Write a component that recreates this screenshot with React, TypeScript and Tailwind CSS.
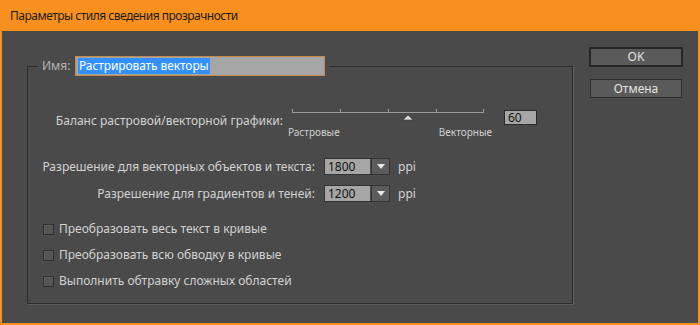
const font = { fontFamily: '"Noto Sans", "Open Sans", sans-serif' };

function Slider() {
  return (
    <div className="ml-[5px] flex w-[204px] flex-col">
      <svg width="204" height="16" className="mt-[2px] block" aria-hidden="true">
        <g stroke="#9c9c9c" strokeWidth="1" shapeRendering="crispEdges">
          <line x1="4" y1="4.5" x2="196" y2="4.5" />
          <line x1="4.5" y1="1" x2="4.5" y2="5" />
          <line x1="52.5" y1="1" x2="52.5" y2="5" />
          <line x1="100.5" y1="1" x2="100.5" y2="5" />
          <line x1="148.5" y1="1" x2="148.5" y2="5" />
          <line x1="195.5" y1="1" x2="195.5" y2="5" />
        </g>
        <polygon points="120,7 115,12 125,12" fill="#d8d8d8" stroke="#3a3a3a" strokeWidth="0.6" />
      </svg>
      <div className="mt-[2px] flex justify-between text-[10px] leading-[13px] text-[#d0d0d0]">
        <span>Растровые</span>
        <span>Векторные</span>
      </div>
    </div>
  );
}

function Dropdown({ value }: { value: string }) {
  return (
    <div className="ml-[9px] flex h-[17px] w-[66px] border border-[#333]">
      <div className="flex flex-1 items-center bg-[#a6a6a6] pl-[3px] text-[12px] leading-none text-[#111]">{value}</div>
      <div className="ml-[1px] flex w-[18px] items-center justify-center border-l border-[#333] bg-[#5c5c5c]">
        <svg width="8" height="5" viewBox="0 0 8 5" aria-hidden="true">
          <polygon points="0,0 8,0 4,5" fill="#e8e8e8" />
        </svg>
      </div>
    </div>
  );
}

function Check({ label }: { label: string }) {
  return (
    <div className="flex h-[18px] items-center pl-[15px]">
      <div className="h-[11px] w-[11px] border border-[#2f2f2f] bg-[#555] shadow-[inset_1px_1px_0_#606060]" />
      <span className="ml-[5px] whitespace-nowrap text-[12px] text-[#d2d2d2]">{label}</span>
    </div>
  );
}

export default function App() {
  return (
    <div style={font} className="flex h-[325px] w-[700px] flex-col bg-[#f7901e]">
      <div className="flex h-[31px] items-center pl-[10px] text-[12px] tracking-[-0.5px] text-[#1c1c1c]">
        Параметры стиля сведения прозрачности
      </div>
      <div className="mx-[2px] mb-[2px] flex flex-1 items-start bg-[#4a4a4a]">
        <fieldset className="ml-[25px] mt-[25px] h-[248px] w-[546px] border border-[#2c2c2c] shadow-[1px_1px_0_#5e5e5e]">
          <legend className="ml-[10px] px-[4px]">
            <div className="flex h-[20px] items-center">
              <span className="w-[33px] text-[12px] text-[#b4b4b4]">Имя:</span>
              <div className="flex h-[20px] w-[250px] items-center border border-[#c58a4c] bg-[#a6a6a6] pl-[2px]">
                <span className="bg-[#3390ff] px-[1px] text-[12px] leading-[16px] tracking-[-0.1px] text-white">Растрировать векторы</span>
              </div>
            </div>
          </legend>

          <div className="mt-[30px] flex items-start">
            <div className="w-[255px] whitespace-nowrap pt-[6px] text-right text-[12px] leading-[18px] text-[#d2d2d2]">
              Баланс растровой/векторной графики:
            </div>
            <Slider />
            <div className="ml-[12px] mt-[4px] flex h-[15px] w-[33px] items-center border border-[#2a2a2a] bg-[#a6a6a6] pl-[3px] text-[12px] leading-none text-[#111]">
              60
            </div>
          </div>

          <div className="mt-[19px] flex h-[17px] items-center">
            <div className="w-[287px] whitespace-nowrap text-right text-[12px] text-[#d2d2d2]">Разрешение для векторных объектов и текста:</div>
            <Dropdown value="1800" />
            <span className="ml-[8px] text-[12px] text-[#d2d2d2]">ppi</span>
          </div>
          <div className="mt-[10px] flex h-[17px] items-center">
            <div className="w-[287px] whitespace-nowrap text-right text-[12px] text-[#d2d2d2]">Разрешение для градиентов и теней:</div>
            <Dropdown value="1200" />
            <span className="ml-[8px] text-[12px] text-[#d2d2d2]">ppi</span>
          </div>

          <div className="mt-[18px] flex flex-col gap-[8px]">
            <Check label="Преобразовать весь текст в кривые" />
            <Check label="Преобразовать всю обводку в кривые" />
            <Check label="Выполнить обтравку сложных областей" />
          </div>
        </fieldset>

        <div className="ml-[16px] mt-[16px] flex w-[94px] flex-col items-center gap-[12px]">
          <button className="h-[20px] w-[94px] border-2 border-[#262626] bg-[#5a5a5a] text-[12px] leading-none text-[#e2e2e2]">
            OK
          </button>
          <button className="h-[19px] w-[92px] border border-[#2e2e2e] bg-[#5a5a5a] text-[12px] leading-none text-[#e2e2e2]">
            Отмена
          </button>
        </div>
      </div>
    </div>
  );
}
